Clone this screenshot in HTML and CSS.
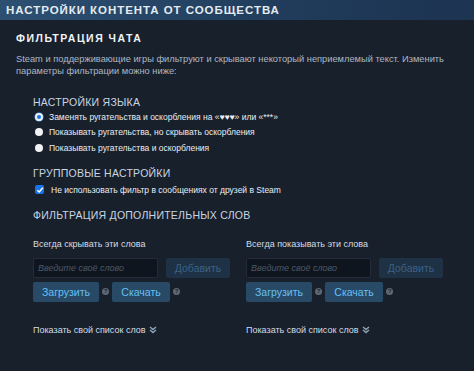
FILE: index.html
```html
<!DOCTYPE html>
<html lang="ru">
<head>
    <meta charset="UTF-8">
    <meta name="viewport" content="width=device-width, initial-scale=1.0">
    <title>Настройки контента от сообщества</title>
    <link rel="stylesheet" href="styles.css">
</head>
<body>
    <header class="page-head">
        <h1>НАСТРОЙКИ КОНТЕНТА ОТ СООБЩЕСТВА</h1>
    </header>

    <main class="content">
        <h2 class="section-title">ФИЛЬТРАЦИЯ ЧАТА</h2>
        <p class="intro">Steam и поддерживающие игры фильтруют и скрывают некоторый неприемлемый текст. Изменить параметры фильтрации можно ниже:</p>

        <div class="group">
            <h3 class="group-title">НАСТРОЙКИ ЯЗЫКА</h3>
            <label class="option"><span class="radio checked"></span>Заменять ругательства и оскорбления на «♥♥♥» или «***»</label>
            <label class="option"><span class="radio"></span>Показывать ругательства, но скрывать оскорбления</label>
            <label class="option"><span class="radio"></span>Показывать ругательства и оскорбления</label>

            <h3 class="group-title spaced">ГРУППОВЫЕ НАСТРОЙКИ</h3>
            <label class="option check-option">
                <span class="checkbox">
                    <svg width="8" height="8" viewBox="0 0 8 8"><path d="M1.3 4.2 L3.2 6 L6.8 1.8" fill="none" stroke="#fff" stroke-width="1.5"/></svg>
                </span>
                Не использовать фильтр в сообщениях от друзей в Steam
            </label>

            <h3 class="group-title spaced">ФИЛЬТРАЦИЯ ДОПОЛНИТЕЛЬНЫХ СЛОВ</h3>

            <div class="word-lists">
                <div class="word-list">
                    <div class="list-label">Всегда скрывать эти слова</div>
                    <div class="add-row">
                        <input class="word-input" type="text" placeholder="Введите своё слово">
                        <button class="btn btn-disabled">Добавить</button>
                    </div>
                    <div class="file-row">
                        <button class="btn">Загрузить</button>
                        <span class="help">?</span>
                        <button class="btn">Скачать</button>
                        <span class="help">?</span>
                    </div>
                    <a class="show-list" href="#">Показать свой список слов
                        <svg width="8" height="8" viewBox="0 0 8 8"><path d="M1 1 L4 3.5 L7 1 M1 4 L4 6.5 L7 4" fill="none" stroke="#8fa3b8" stroke-width="1.4"/></svg>
                    </a>
                </div>

                <div class="word-list">
                    <div class="list-label">Всегда показывать эти слова</div>
                    <div class="add-row">
                        <input class="word-input" type="text" placeholder="Введите своё слово">
                        <button class="btn btn-disabled">Добавить</button>
                    </div>
                    <div class="file-row">
                        <button class="btn">Загрузить</button>
                        <span class="help">?</span>
                        <button class="btn">Скачать</button>
                        <span class="help">?</span>
                    </div>
                    <a class="show-list" href="#">Показать свой список слов
                        <svg width="8" height="8" viewBox="0 0 8 8"><path d="M1 1 L4 3.5 L7 1 M1 4 L4 6.5 L7 4" fill="none" stroke="#8fa3b8" stroke-width="1.4"/></svg>
                    </a>
                </div>
            </div>
        </div>
    </main>
</body>
</html>
```

FILE: styles.css
```css
body {
    margin: 0;
    background-color: #18202c;
    font-family: "Liberation Sans", Arial, sans-serif;
    color: #c6d4df;
    height: 371px;
    overflow: hidden;
}
.page-head {
    height: 20px;
    background: linear-gradient(to right, #2d5072, #1f3958 70%, #1d3452);
    display: flex;
    align-items: center;
    padding-left: 6px;
}
.page-head h1 {
    margin: 0;
    font-size: 11.5px;
    font-weight: bold;
    letter-spacing: 0.95px;
    color: #e4ebf1;
}
.content {
    padding: 11px 6px 0 16px;
}
.section-title {
    margin: 0;
    font-size: 10.5px;
    line-height: 14px;
    font-weight: bold;
    letter-spacing: 1.5px;
    color: #eef3f7;
}
.intro {
    margin: 8px 0 0;
    font-size: 9.3px;
    line-height: 12px;
    color: #acb8c4;
}
.group {
    padding-left: 17px;
    margin-top: 18px;
}
.group-title {
    margin: 0;
    font-size: 10.5px;
    line-height: 14px;
    font-weight: normal;
    letter-spacing: 0.25px;
    color: #c9d6e1;
}
.group-title.spaced {
    margin-top: 10px;
}
.option {
    display: flex;
    align-items: center;
    height: 15.5px;
    font-size: 8.5px;
    color: #e8edf2;
}
.radio {
    width: 8px;
    height: 8px;
    border-radius: 50%;
    background-color: #f2f2f2;
    margin: 0 6px 0 2px;
    box-sizing: border-box;
}
.radio.checked {
    background-color: #1a73e8;
    border: 2px solid #e9eef5;
    box-shadow: 0 0 0 0.5px #5d9cec;
}
.check-option {
    margin-top: 2px;
    height: 16px;
}
.checkbox {
    width: 9px;
    height: 9px;
    border-radius: 2px;
    background-color: #1a73e8;
    display: flex;
    align-items: center;
    justify-content: center;
    margin: 0 7px 0 2px;
}
.word-lists {
    display: grid;
    grid-template-columns: 213px 213px;
    margin-top: 16px;
}
.list-label {
    font-size: 9px;
    line-height: 12px;
    color: #d4dde5;
}
.add-row {
    display: flex;
    gap: 8px;
    margin-top: 8px;
}
.word-input {
    width: 125px;
    height: 20px;
    box-sizing: border-box;
    background-color: #0f151e;
    border: 1px solid #232c38;
    border-radius: 2px;
    padding: 0 4px;
    font-family: inherit;
    font-size: 9px;
    color: #c6d4df;
}
.word-input::placeholder {
    color: #4c5866;
    font-style: italic;
}
.btn {
    height: 20px;
    padding: 0;
    border: none;
    border-radius: 2px;
    background-color: #284a66;
    color: #66c0f4;
    font-family: inherit;
    font-size: 10.5px;
}
.btn-disabled {
    width: 64px;
    background-color: #1e3145;
    color: #3b6185;
}
.file-row {
    display: flex;
    align-items: center;
    margin-top: 4px;
}
.file-row .btn {
    width: 66px;
}
.file-row .btn + .help + .btn {
    width: 58px;
}
.help {
    width: 7px;
    height: 7px;
    border-radius: 50%;
    background-color: #5f6872;
    color: #1b2330;
    font-size: 6px;
    font-weight: bold;
    line-height: 7px;
    text-align: center;
    margin: 0 3px 0 3px;
}
.show-list {
    display: flex;
    align-items: center;
    gap: 3px;
    margin-top: 22px;
    font-size: 9px;
    line-height: 12px;
    color: #d4dde5;
    text-decoration: none;
}
```
